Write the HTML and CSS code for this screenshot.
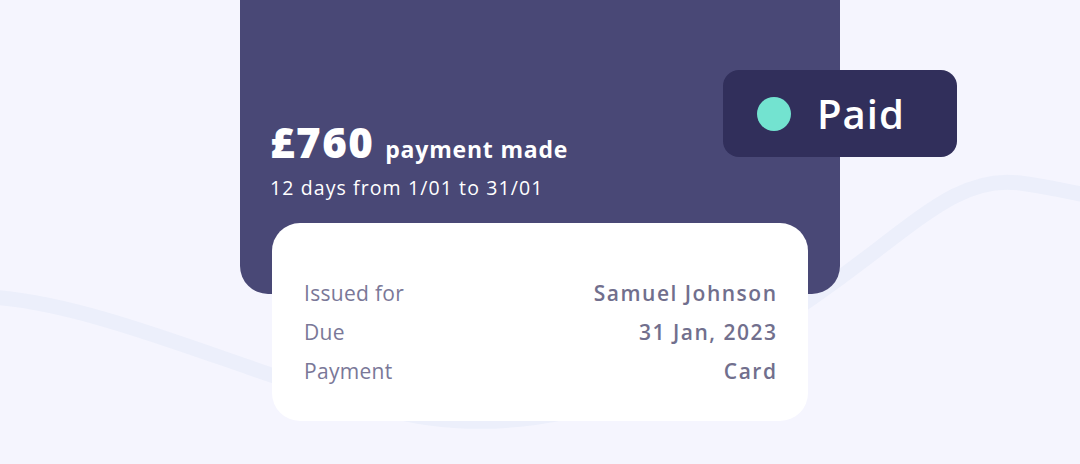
FILE: index.html
```html
<!DOCTYPE html>
<html lang="en">
<head>
    <meta charset="UTF-8">
    <meta name="viewport" content="width=device-width, initial-scale=1.0">
    <title>Invoice</title>
    <link rel="stylesheet" href="styles.css">
</head>
<body>
    <!-- background wave -->
    <svg class="wave" width="1080" height="464" viewBox="0 0 1080 464">
        <path d="M-10 297 C 120 305, 300 400, 430 418 C 560 436, 700 380, 830 285 C 920 220, 960 175, 1020 183 C 1050 187, 1070 192, 1090 196" />
    </svg>

    <main class="stage">
        <section class="summary">
            <div class="badge"><span class="dot"></span>Paid</div>
            <p class="amount"><strong>£760</strong> payment made</p>
            <p class="period">12 days from 1/01 to 31/01</p>
        </section>

        <dl class="details">
            <div class="row"><dt>Issued for</dt><dd>Samuel Johnson</dd></div>
            <div class="row"><dt>Due</dt><dd>31 Jan, 2023</dd></div>
            <div class="row"><dt>Payment</dt><dd>Card</dd></div>
        </dl>
    </main>
</body>
</html>
```

FILE: styles.css
```css
/* page */
body {
    margin: 0;
    height: 464px;
    overflow: hidden;
    background-color: #f5f5fe;
    font-family: 'Open Sans', sans-serif;
    position: relative;
}

.wave {
    position: absolute;
    top: 0;
    left: 0;
}
.wave path {
    fill: none;
    stroke: #eceffb;
    stroke-width: 15;
}

.stage {
    position: relative;
    width: 600px;
    margin-left: 240px;
}

/* dark summary card */
.summary {
    box-sizing: border-box;
    height: 294px;
    padding: 114px 30px 0;
    background-color: #494876;
    border-radius: 0 0 28px 28px;
    color: #fff;
}
.amount {
    margin: 0;
    font-size: 23px;
    font-weight: 700;
    line-height: 56px;
    letter-spacing: 0.8px;
}
.amount strong {
    font-size: 42px;
    letter-spacing: 1.5px;
    margin-right: 4px;
}
.period {
    margin: 0;
    font-size: 19.5px;
    line-height: 22px;
    letter-spacing: 1.1px;
}

/* status badge */
.badge {
    position: absolute;
    top: 70px;
    left: 483px;
    width: 234px;
    height: 87px;
    box-sizing: border-box;
    padding-left: 34px;
    display: flex;
    align-items: center;
    gap: 26px;
    background-color: #312f5b;
    border-radius: 16px;
    font-size: 40px;
    font-weight: 600;
    letter-spacing: 1px;
    color: #fff;
}
.dot {
    width: 34px;
    height: 34px;
    border-radius: 50%;
    background-color: #73e3d0;
}

/* details card */
.details {
    position: relative;
    margin: -71px 32px 0;
    padding: 51px 32px 30px;
    background-color: #fff;
    border-radius: 28px;
    color: #7a7898;
    font-size: 21px;
}
.row {
    display: flex;
    justify-content: space-between;
    line-height: 39px;
}
.row dt {
    letter-spacing: 0.3px;
}
.row dd {
    margin: 0 -1.5px 0 0;
    font-weight: 600;
    letter-spacing: 1.5px;
    color: #716f8d;
}
```
